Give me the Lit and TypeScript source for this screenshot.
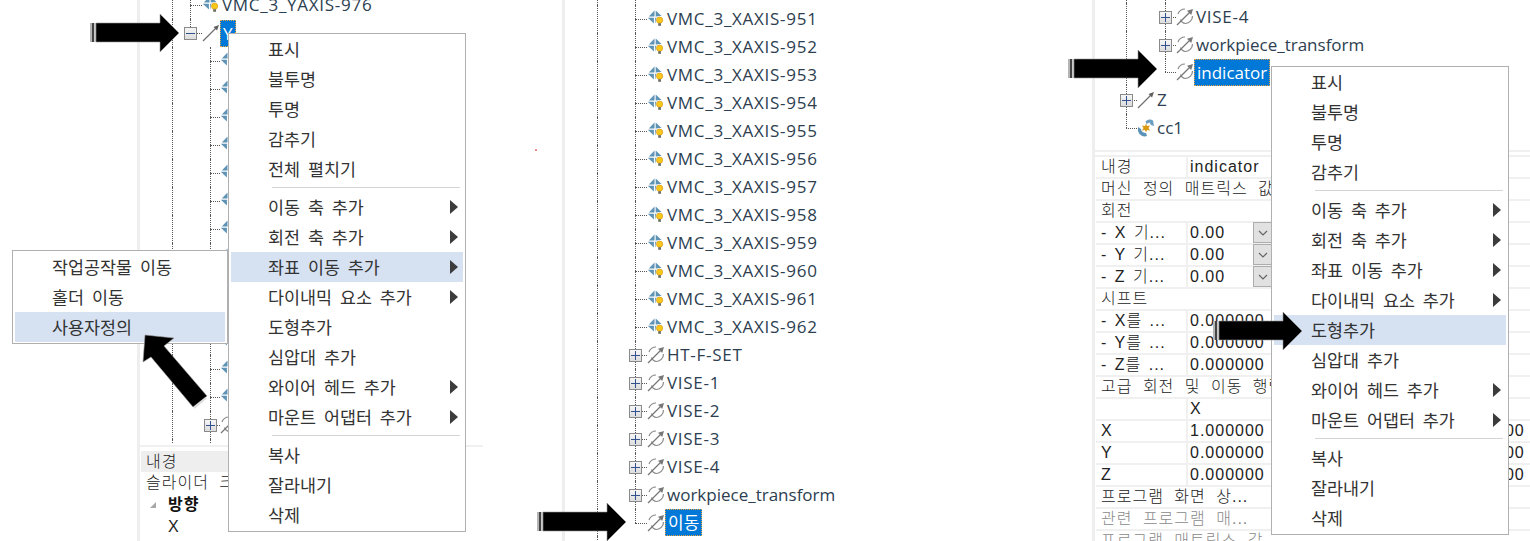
import { LitElement, html, css, svg, nothing } from "lit";
import { customElement, property } from "lit/decorators.js";

const gemIcon = html`<svg class="icon" viewBox="0 0 18 18" width="18" height="18">
  <path d="M7.5 0.5 V6.5 H1.8 Z M8.7 0.5 L14.5 6 L8.7 6.5 Z M0.8 7.7 H6.9 V13.6 Z M8.1 7.7 H10 L8.1 13.8 Z" fill="#5f93b5"/>
  <circle cx="12.6" cy="10.4" r="3.9" fill="#fff"/>
  <circle cx="12.6" cy="10.2" r="3.1" fill="#f8c81c" stroke="#d99a10" stroke-width=".7"/>
  <rect x="11.2" y="13.2" width="2.8" height="2.6" fill="#6f6f68"/>
</svg>`;

const transformIcon = html`<svg class="icon" viewBox="0 0 18 18" width="18" height="18">
  <path d="M9 1 A7.5 7.5 0 0 0 2 6" fill="none" stroke="#8a8a8a" stroke-width="1.2"/>
  <path d="M16.5 8 A7.5 7.5 0 0 1 9.5 15.5 A6 6 0 0 1 4.5 11.5" fill="none" stroke="#8a8a8a" stroke-width="1.2"/>
  <path d="M1 17 L13.5 4.5" stroke="#777" stroke-width="1.2"/>
  <path d="M17 1 L11 2.8 L15.2 7 Z" fill="#777"/>
</svg>`;

const axisIcon = html`<svg class="icon" viewBox="0 0 18 18" width="18" height="18">
  <path d="M1 17 L14.5 3.5" stroke="#707070" stroke-width="1.3"/>
  <path d="M17 1 L11.5 3 L15 6.5 Z" fill="#606060"/>
</svg>`;

const ccIcon = html`<svg class="icon" viewBox="0 0 18 18" width="18" height="18">
  <path d="M8.5 2.5 A5.5 5.5 0 0 1 16 1.5 L17 7 L14 6 L12.5 3.5 L9.5 5 Z" fill="#6b9fc0"/>
  <path d="M1 8 L4 10 A4.5 4.5 0 0 0 9 14 L10 17 A7 7 0 0 1 1 12 Z" fill="#5b93b8"/>
  <path d="M9 4.5 L10 7 L13 6.5 L11.5 9 L13 11.5 L10 11 L9 13.5 L8 11 L5 11.5 L6.5 9 L5 6.5 L8 7 Z" fill="#d99a10"/>
</svg>`;

const icons: Record<string, unknown> = { gem: gemIcon, transform: transformIcon, axis: axisIcon, cc: ccIcon };

interface TreeNode {
  guides: number[];
  branch?: number;
  icon?: string;
  label?: string;
  expander?: "plus" | "minus";
  selected?: boolean;
  last?: boolean;
  height?: number;
}

@customElement("tree-row")
class TreeRow extends LitElement {
  @property({ attribute: false }) node!: TreeNode;

  static styles = css`
    :host { display: block; }
    .row { display: flex; align-items: center; height: 28px; }
    .guide { align-self: stretch; flex: none; box-sizing: border-box; border-left: 1px dotted #555; }
    .branch { align-self: stretch; flex: none; position: relative; box-sizing: border-box; }
    .branch::before { content: ""; position: absolute; left: 0; top: 0; bottom: 0; border-left: 1px dotted #555; }
    .branch.last::before { bottom: 50%; }
    .branch::after { content: ""; position: absolute; left: 0; right: 0; top: 50%; border-top: 1px dotted #555; }
    .box {
      position: absolute; left: -6px; top: 50%; margin-top: -6px; z-index: 1;
      width: 13px; height: 13px; box-sizing: border-box;
      border: 1px solid #8a8a8a; background: linear-gradient(#f6f6f6, #dcdcdc);
      display: flex; align-items: center; justify-content: center;
    }
    .box svg { display: block; }
    .icon { flex: none; display: block; }
    .label {
      margin-left: 2px; white-space: nowrap; color: #2c3e50;
      font: 17px "Open Sans", "Noto Sans CJK KR", sans-serif; line-height: 24px;
    }
    .label.caps { letter-spacing: 0.72px; }
    .label.selected {
      background: #0078d7; color: #fff; outline: 1px dotted #e8a33c; outline-offset: -1px;
      height: 27px; line-height: 27px; padding: 0 3px; margin-left: 0; letter-spacing: 0;
    }
  `;

  render() {
    const n = this.node;
    const rowHeight = n.height ?? 28;
    const caps = n.label && n.label === n.label.toUpperCase() && /[A-Z]/.test(n.label);
    return html`<div class="row" style="height:${rowHeight}px">
      ${n.guides.map((w) => html`<span class="guide" style="width:${w}px"></span>`)}
      ${n.branch
        ? html`<span class="branch ${n.last ? "last" : ""}" style="width:${n.branch}px">
            ${n.expander
              ? html`<span class="box"><svg width="9" height="9" viewBox="0 0 9 9">
                  <path d="M0 4.5H9" stroke="#33518f" stroke-width="1"/>
                  ${n.expander === "plus" ? svg`<path d="M4.5 0V9" stroke="#33518f" stroke-width="1"/>` : nothing}
                </svg></span>`
              : nothing}
          </span>`
        : nothing}
      ${n.icon ? icons[n.icon] : nothing}
      ${n.label ? html`<span class="label ${caps ? "caps" : ""} ${n.selected ? "selected" : ""}">${n.label}</span>` : nothing}
    </div>`;
  }
}

interface MenuItem { text?: string; sub?: boolean; active?: boolean; sep?: boolean; }

@customElement("context-menu")
class ContextMenu extends LitElement {
  @property({ attribute: false }) items: MenuItem[] = [];

  static styles = css`
    :host { display: block; position: absolute; z-index: 5; }
    .menu {
      box-sizing: border-box; width: 100%; height: 100%; background: #fff; border: 1px solid #b0b0b0;
      padding: var(--menu-top, 0px) 2px 0; font: 17.4px "Noto Sans CJK KR", sans-serif; word-spacing: 4px; color: #333;
    }
    .item { height: 30px; box-sizing: border-box; display: flex; align-items: center; justify-content: space-between; padding: 0 5px 2px 37px; white-space: nowrap; }
    .item.active { background: #d6e2f2; }
    .arrow { width: 0; height: 0; margin-top: 2px; border-left: 8px solid #3c3c3c; border-top: 7.5px solid transparent; border-bottom: 7.5px solid transparent; }
    .sep { height: 1px; background: #d4d4d4; margin: 3px 3px 4px 41px; }
  `;

  render() {
    return html`<div class="menu">
      ${this.items.map((it) =>
        it.sep
          ? html`<div class="sep"></div>`
          : html`<div class="item ${it.active ? "active" : ""}"><span>${it.text}</span>${it.sub ? html`<span class="arrow"></span>` : nothing}</div>`
      )}
    </div>`;
  }
}

const menuLower = (active?: string): MenuItem[] => [
  { text: "이동 축 추가", sub: true },
  { text: "회전 축 추가", sub: true },
  { text: "좌표 이동 추가", sub: true, active: active === "좌표 이동 추가" },
  { text: "다이내믹 요소 추가", sub: true },
  { text: "도형추가", active: active === "도형추가" },
  { text: "심압대 추가" },
  { text: "와이어 헤드 추가", sub: true },
  { text: "마운트 어댑터 추가", sub: true },
  { sep: true },
  { text: "복사" },
  { text: "잘라내기" },
  { text: "삭제" },
];

const menuLeft: MenuItem[] = [
  { text: "표시" }, { text: "불투명" }, { text: "투명" }, { text: "감추기" }, { text: "전체 펼치기" },
  { sep: true }, ...menuLower("좌표 이동 추가"),
];
const menuRight: MenuItem[] = [
  { text: "표시" }, { text: "불투명" }, { text: "투명" }, { text: "감추기" },
  { sep: true }, ...menuLower("도형추가"),
];
const subMenu: MenuItem[] = [{ text: "작업공작물 이동" }, { text: "홀더 이동" }, { text: "사용자정의", active: true }];

// first panel tree
const leftTree: TreeNode[] = [
  { guides: [18], branch: 12, icon: "gem", label: "VMC_3_YAXIS-976" },
  { guides: [18], branch: 12, icon: "axis", label: "Y", expander: "minus", selected: true, last: true },
  ...Array.from({ length: 13 }, (): TreeNode => ({ guides: [38], branch: 10, icon: "gem" })),
  { guides: [38], branch: 10, icon: "transform", expander: "plus" },
  { guides: [38], branch: 10, icon: "transform" },
];

// middle panel tree
const midTree: TreeNode[] = [
  { guides: [38, 1], height: 5 },
  ...Array.from({ length: 12 }, (_, i): TreeNode => ({ guides: [38], branch: 12, icon: "gem", label: `VMC_3_XAXIS-${951 + i}` })),
  ...["HT-F-SET", "VISE-1", "VISE-2", "VISE-3", "VISE-4", "workpiece_transform"].map(
    (label): TreeNode => ({ guides: [38], branch: 12, icon: "transform", label, expander: "plus" })
  ),
  { guides: [38], branch: 12, icon: "transform", label: "이동", selected: true, last: true, height: 27 },
  { guides: [38] },
];

// right panel tree
const rightTree: TreeNode[] = [
  { guides: [39, 1], height: 3 },
  { guides: [39], branch: 11, icon: "transform", label: "VISE-4", expander: "plus" },
  { guides: [39], branch: 11, icon: "transform", label: "workpiece_transform", expander: "plus" },
  { guides: [39], branch: 11, icon: "transform", label: "indicator", selected: true, last: true, height: 26 },
  { guides: [], branch: 11, icon: "axis", label: "Z", expander: "plus", height: 29 },
  { guides: [], branch: 11, icon: "cc", label: "cc1", last: true },
];

interface PropRow { a?: string; b?: string; span?: string; drop?: boolean; dim?: boolean; end?: string; }

const propRows: PropRow[] = [
  { a: "내경", b: "indicator" },
  { span: "머신 정의 매트릭스 값" },
  { span: "회전" },
  { a: "- X 기...", b: "0.00", drop: true },
  { a: "- Y 기...", b: "0.00", drop: true },
  { a: "- Z 기...", b: "0.00", drop: true },
  { span: "시프트" },
  { a: "- X를 ...", b: "0.000000" },
  { a: "- Y를 ...", b: "0.000000" },
  { a: "- Z를 ...", b: "0.000000" },
  { span: "고급 회전 및 이동 행렬" },
  { a: "", b: "X" },
  { a: "X", b: "1.000000", end: "0.000000" },
  { a: "Y", b: "0.000000", end: "0.000000" },
  { a: "Z", b: "0.000000", end: "0.000000" },
  { span: "프로그램 화면 상..." },
  { span: "관련 프로그램 매...", dim: true },
  { span: "프로그램 매트릭스 값", dim: true },
];

const blockArrow = (w: number, cls: string) => html`<svg class="pointer ${cls}" width="${w}" height="38" viewBox="0 0 ${w} 38">
  <rect x="0" y="9" width="2" height="19" fill="#b5b5b5"/>
  <rect x="2" y="9" width="2" height="19" fill="#444"/>
  <rect x="4" y="9" width="2" height="19" fill="#c9c9c9"/>
  <path d="M6 9 H${w - 19} V0 L${w} 19 L${w - 19} 38 V28 H6 Z" fill="#000" stroke="#999" stroke-width=".6"/>
</svg>`;

@customElement("app-root")
class AppRoot extends LitElement {
  static styles = css`
    :host { display: block; width: 1530px; height: 541px; overflow: hidden; background: #fff; font-family: "Noto Sans CJK KR", sans-serif; }
    .shots { display: grid; grid-template-columns: 530px 530px 470px; height: 541px; }
    .shot { position: relative; overflow: hidden; }
    .shot.left { padding-left: 137px; }
    .shot.mid, .shot.right { padding-left: 32px; }
    .pane { border-left: 3px solid #eee; box-sizing: border-box; height: 100%; display: flex; flex-direction: column; }
    .tree { overflow: hidden; flex: none; }
    .left .tree { height: 443px; padding: 0 0 0 32px; }
    .left .tree-inner { margin-top: -9px; }
    .mid .tree { height: 541px; padding: 0 0 0 32px; }
    .right .tree { height: 149px; padding: 0 0 0 31px; }
    .rule { height: 2px; background: #f0f0f0; flex: none; }
    .left .rule { margin-top: 2px; width: 343px; }
    .right .rule { margin-top: 1px; }

    .table-text {
      font: 300 16px "Liberation Sans", "Noto Sans CJK KR", sans-serif;
      letter-spacing: 1px; word-spacing: 5px; color: #222;
    }
    .slider { flex: 1; padding: 4px 0 0 1px; }
    .slider .head { background: #eee; height: 21px; line-height: 21px; padding-left: 5px; width: 300px; }
    .slider .line { height: 22px; line-height: 22px; padding-left: 5px; white-space: nowrap; }
    .slider .bold { font-weight: 700; padding-left: 9px; display: flex; align-items: center; gap: 12px; color: #111; }
    .slider .tri { width: 0; height: 0; border-left: 6px solid transparent; border-bottom: 6px solid #a8a8a8; }
    .slider .x { padding-left: 27px; display: flex; justify-content: space-between; width: 320px; box-sizing: border-box; }

    .props { margin-top: 3px; border-top: 2px solid #f0f0f0; padding-left: 1px; flex: none; }
    .prop {
      display: grid; grid-template-columns: 90px 130px 130px 1fr; height: 22px; box-sizing: border-box;
      border-bottom: 2px solid #f0f0f0; line-height: 20px; white-space: nowrap;
    }
    .prop > span { padding-left: 2px; position: relative; word-spacing: 2px; }
    .prop > span:first-child { padding-left: 5px; }
    .prop .cell { border-left: 2px solid #f0f0f0; }
    .prop > .full { grid-column: 1 / -1; padding-left: 5px; word-spacing: 5px; }
    .prop.dim { color: #8a8a8a; }
    .drop {
      position: absolute; left: 65px; top: -1px; width: 20px; height: 21px; box-sizing: border-box;
      background: #e1e1e1; border: 1px solid #adadad; display: flex; align-items: center; justify-content: center;
    }

    .pointer { position: absolute; z-index: 6; display: block; }
    .p1 { left: 90px; top: 14px; }
    .p2 { left: 7px; top: 503px; }
    .p3 { left: 8px; top: 50px; }
    .p4 { left: 153px; top: 312px; }
    .p5 { left: 140px; top: 332px; z-index: 6; position: absolute; display: block; }
    .m1 { left: 228px; top: 33px; width: 238px; height: 499px; }
    .m2 { left: 12px; top: 250px; width: 216px; height: 94px; --menu-top: 1px; }
    .m3 { left: 211px; top: 66px; width: 238px; height: 469px; }
    .dot { position: absolute; left: 5px; top: 149px; width: 2px; height: 2px; background: #f08a8a; }
  `;

  render() {
    return html`<div class="shots">
      <section class="shot left">
        <div class="pane">
          <div class="tree"><div class="tree-inner">${leftTree.map((n) => html`<tree-row .node=${n}></tree-row>`)}</div></div>
          <div class="rule"></div>
          <div class="slider table-text">
            <div class="head">내경</div>
            <div class="line">슬라이더 크기</div>
            <div class="line bold"><span class="tri"></span>방향</div>
            <div class="line x"><span>X</span><span>1.000000</span></div>
          </div>
        </div>
        ${blockArrow(89, "p1")}
        <svg class="p5" width="70" height="78" viewBox="0 0 70 78">
          <path d="M5 3 L34 6 L24 14 L67 64 L53 75 L11 25 L3 30 Z" fill="#000" stroke="#999" stroke-width=".6"/>
          <path d="M66 66 L54 76" stroke="#ddd" stroke-width="2"/>
        </svg>
        <context-menu class="m2" .items=${subMenu}></context-menu>
        <context-menu class="m1" .items=${menuLeft}></context-menu>
      </section>

      <section class="shot mid">
        <div class="pane">
          <div class="tree">${midTree.map((n) => html`<tree-row .node=${n}></tree-row>`)}</div>
        </div>
        <span class="dot"></span>
        ${blockArrow(89, "p2")}
      </section>

      <section class="shot right">
        <div class="pane">
          <div class="tree">${rightTree.map((n) => html`<tree-row .node=${n}></tree-row>`)}</div>
          <div class="rule"></div>
          <div class="props table-text">
            ${propRows.map((r) =>
              r.span
                ? html`<div class="prop ${r.dim ? "dim" : ""}"><span class="full">${r.span}</span></div>`
                : html`<div class="prop">
                    <span>${r.a}</span>
                    <span class="cell">${r.b}${r.drop
                      ? html`<span class="drop"><svg width="10" height="6" viewBox="0 0 10 6"><path d="M1 1 L5 5 L9 1" fill="none" stroke="#666" stroke-width="1.2"/></svg></span>`
                      : nothing}</span>
                    <span class="cell"></span>
                    <span class="cell">${r.end ?? ""}</span>
                  </div>`
            )}
          </div>
        </div>
        ${blockArrow(89, "p3")}
        <context-menu class="m3" .items=${menuRight}></context-menu>
        ${blockArrow(89, "p4")}
      </section>
    </div>`;
  }
}
